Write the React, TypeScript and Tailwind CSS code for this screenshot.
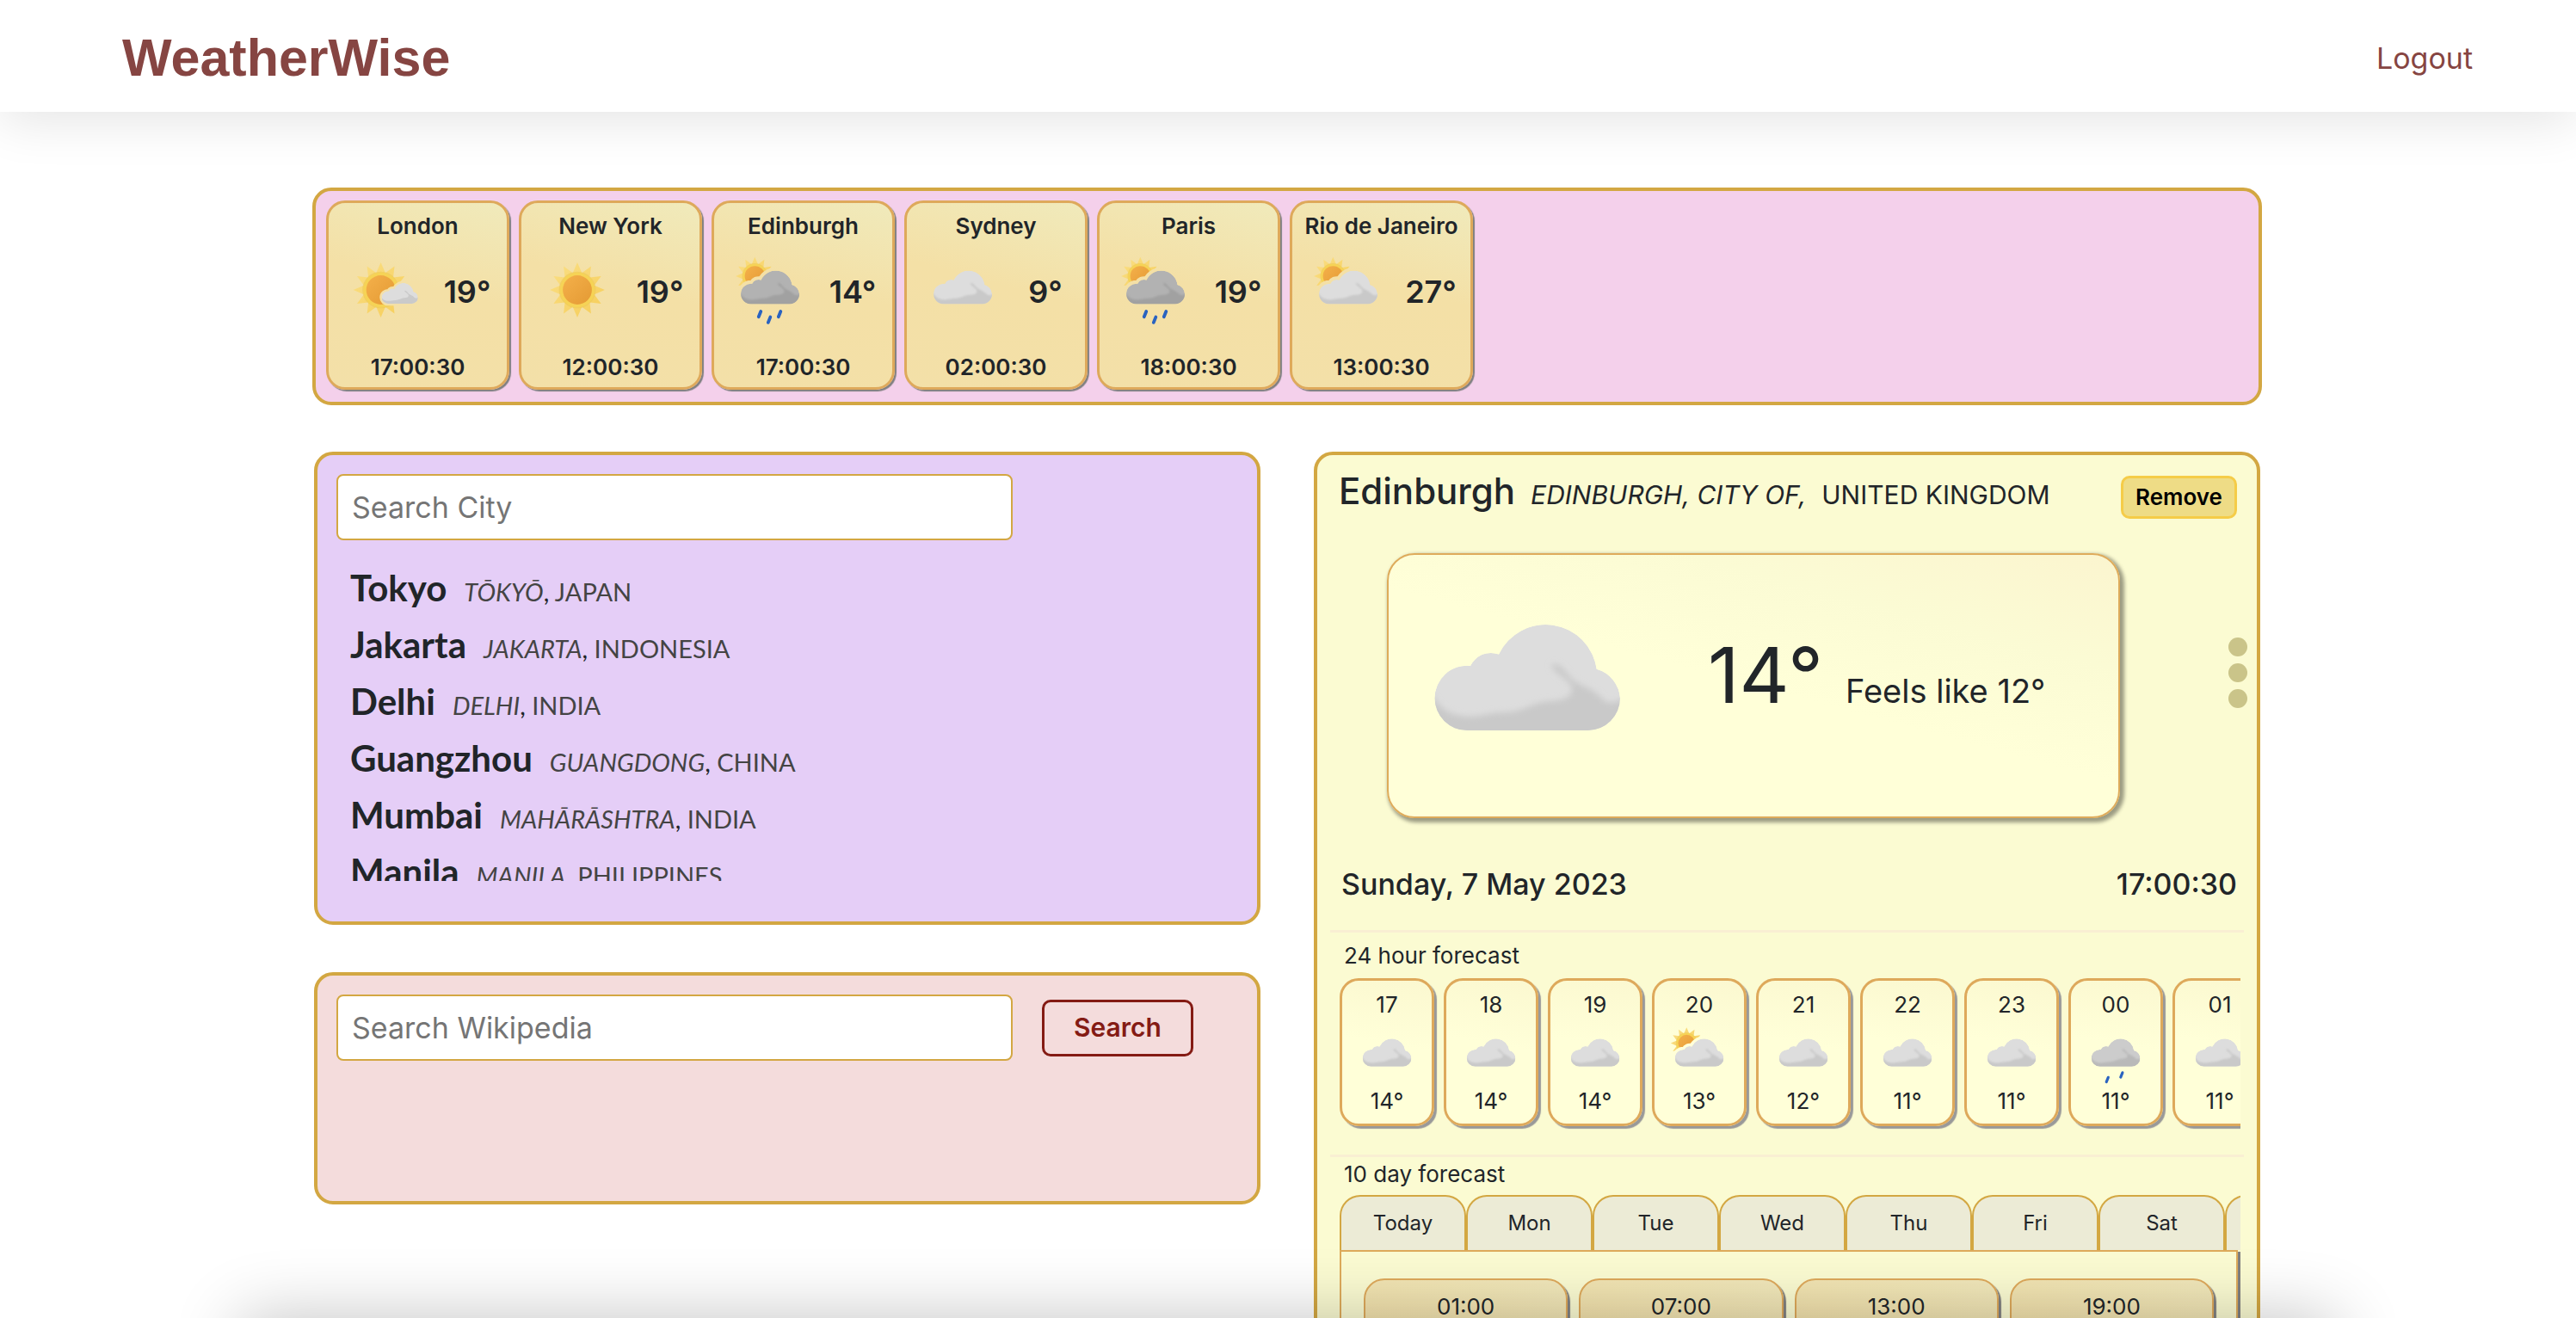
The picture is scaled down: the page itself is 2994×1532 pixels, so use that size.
import { useId } from "react";

type Sky = "partly" | "sunny" | "sunRain" | "cloudy" | "cloudSun" | "drizzle";

const CLOUD =
  "M38 122A37.5 37.5 0 0 1 0.5 84.5A37.5 37.5 0 0 1 42 47A26.5 26.5 0 0 1 75 33.5A60 60 0 0 1 188.7 50.7A37.5 37.5 0 0 1 216 85A37.5 37.5 0 0 1 179 122Z";
const SHADE =
  "M-4 78C4 92 12 104 39 106C56 106 64 101 82 101C102 100 108 94 122 90C136 86 156 90 160 76C162 64 138 56 136 46C144 40 154 56 160 62C168 70 184 72 196 86C204 92 210 90 222 84L222 130L-4 130Z";

function rays(cx: number, cy: number, outer: number, inner: number) {
  return Array.from({ length: 24 }, (_, i) => {
    const r = i % 2 === 0 ? outer : inner;
    const a = (i * Math.PI) / 12;
    return `${cx + r * Math.sin(a)},${cy - r * Math.cos(a)}`;
  }).join(" ");
}

function Sun({ id, cx, cy, r }: { id: string; cx: number; cy: number; r: number }) {
  return (
    <g>
      <polygon points={rays(cx, cy, r, r * 0.64)} fill={`url(#${id}ray)`} />
      <circle cx={cx} cy={cy} r={r * 0.67} fill="#e9c65a" opacity="0.6" />
      <circle cx={cx} cy={cy} r={r * 0.64} fill="#f6d355" />
      <circle cx={cx} cy={cy} r={r * 0.53} fill={`url(#${id}disc)`} />
    </g>
  );
}

function Cloud({ id, light, dark }: { id: string; light: string; dark: string }) {
  return (
    <g clipPath={`url(#${id}clip)`}>
      <path d={CLOUD} fill={light} />
      <path d={SHADE} fill={dark} filter={`url(#${id}soft)`} />
    </g>
  );
}

function Drop({ x, y }: { x: number; y: number }) {
  return (
    <line x1={x + 4} y1={y - 10} x2={x - 4} y2={y + 10} stroke="#2a63c0" strokeWidth="12" strokeLinecap="round" />
  );
}

function SkyIcon({ sky, className }: { sky: Sky; className: string }) {
  const id = useId().replace(/[^a-zA-Z0-9]/g, "");
  const small = "translate(97 45) scale(0.62)";
  return (
    <svg viewBox="-44 -82 304 304" className={className} aria-hidden="true">
      <defs>
        <linearGradient id={`${id}ray`} x1="0" y1="0" x2="1" y2="1">
          <stop offset="0" stopColor="#fadf85" />
          <stop offset="1" stopColor="#f6cd58" />
        </linearGradient>
        <linearGradient id={`${id}disc`} x1="0" y1="0" x2="1" y2="1">
          <stop offset="0" stopColor="#f4b04a" />
          <stop offset="1" stopColor="#e49a34" />
        </linearGradient>
        <clipPath id={`${id}clip`}>
          <path d={CLOUD} />
        </clipPath>
        <filter id={`${id}soft`} x="-10%" y="-10%" width="120%" height="120%">
          <feGaussianBlur stdDeviation="3.5" />
        </filter>
        <mask id={`${id}gap`} maskUnits="userSpaceOnUse" x="-44" y="-82" width="304" height="304">
          <rect x="-44" y="-82" width="304" height="304" fill="#fff" />
          <path
            d={CLOUD}
            fill="#000"
            stroke="#000"
            strokeWidth="24"
            transform={sky === "partly" ? small : undefined}
          />
        </mask>
      </defs>
      {sky === "sunny" && <Sun id={id} cx={108} cy={70} r={101} />}
      {sky === "partly" && (
        <>
          <g mask={`url(#${id}gap)`}>
            <Sun id={id} cx={94} cy={70} r={101} />
          </g>
          <g transform={small}>
            <Cloud id={id} light="#dddddd" dark="#cacaca" />
          </g>
        </>
      )}
      {(sky === "sunRain" || sky === "cloudSun") && (
        <g mask={`url(#${id}gap)`}>
          <Sun id={id} cx={52} cy={19} r={70} />
        </g>
      )}
      {(sky === "cloudy" || sky === "cloudSun") && <Cloud id={id} light="#dddddd" dark="#c9c9c9" />}
      {sky === "sunRain" && (
        <>
          <Cloud id={id} light="#b2b2b2" dark="#a1a1a1" />
          <Drop x={70} y={159} />
          <Drop x={105} y={180} />
          <Drop x={143} y={159} />
        </>
      )}
      {sky === "drizzle" && (
        <>
          <Cloud id={id} light="#cccccc" dark="#b9b9b9" />
          <Drop x={71} y={180} />
          <Drop x={134} y={159} />
        </>
      )}
    </svg>
  );
}

const cities: { name: string; sky: Sky; temp: number; time: string }[] = [
  { name: "London", sky: "partly", temp: 19, time: "17:00:30" },
  { name: "New York", sky: "sunny", temp: 19, time: "12:00:30" },
  { name: "Edinburgh", sky: "sunRain", temp: 14, time: "17:00:30" },
  { name: "Sydney", sky: "cloudy", temp: 9, time: "02:00:30" },
  { name: "Paris", sky: "sunRain", temp: 19, time: "18:00:30" },
  { name: "Rio de Janeiro", sky: "cloudSun", temp: 27, time: "13:00:30" },
];

const results = [
  ["Tokyo", "TŌKYŌ", "JAPAN"],
  ["Jakarta", "JAKARTA", "INDONESIA"],
  ["Delhi", "DELHI", "INDIA"],
  ["Guangzhou", "GUANGDONG", "CHINA"],
  ["Mumbai", "MAHĀRĀSHTRA", "INDIA"],
  ["Manila", "MANILA", "PHILIPPINES"],
];

const hours: { hour: string; sky: Sky; temp: number }[] = [
  { hour: "17", sky: "cloudy", temp: 14 },
  { hour: "18", sky: "cloudy", temp: 14 },
  { hour: "19", sky: "cloudy", temp: 14 },
  { hour: "20", sky: "cloudSun", temp: 13 },
  { hour: "21", sky: "cloudy", temp: 12 },
  { hour: "22", sky: "cloudy", temp: 11 },
  { hour: "23", sky: "cloudy", temp: 11 },
  { hour: "00", sky: "drizzle", temp: 11 },
  { hour: "01", sky: "cloudy", temp: 11 },
];

const days = ["Today", "Mon", "Tue", "Wed", "Thu", "Fri", "Sat", "Sun"];
const slots = ["01:00", "07:00", "13:00", "19:00"];

function CityStrip() {
  return (
    <section
      aria-label="Saved cities"
      className="flex gap-[11px] rounded-[22px] border-4 border-[#d3a742] bg-[#f4d0eb] px-3 pt-[11px] pb-[14px]"
    >
      {cities.map((c) => (
        <article
          key={c.name}
          className="flex h-[220px] w-[213px] flex-col rounded-[22px] border-[3px] border-[#dea95b] bg-[linear-gradient(195deg,#f0eabb,#f4e0a6_45%,#f3e0a8)] pt-[9px] pb-[5px] text-center shadow-[2px_2px_1px_#808080]"
        >
          <h2 className="text-[26px] leading-9 font-semibold whitespace-nowrap">{c.name}</h2>
          <div className="mt-2 flex items-center pl-[17px]">
            <SkyIcon sky={c.sky} className="size-24 shrink-0" />
            <p className="flex-1 pt-1 pl-0.5 text-[36px] leading-10 font-semibold">{c.temp}°</p>
          </div>
          <p className="mt-auto text-[26px] leading-9 font-semibold">{c.time}</p>
        </article>
      ))}
    </section>
  );
}

function CitySearch() {
  return (
    <section className="h-[550px] rounded-[22px] border-4 border-[#d3a742] bg-[#e5cef7] p-[22px]">
      <input
        type="text"
        aria-label="Search City"
        placeholder="Search City"
        className="block h-[77px] w-3/4 rounded-lg border-2 border-[#d3a742] bg-white px-4 text-[34px] placeholder:text-[#757575]"
      />
      <ul className="h-[396px] overflow-hidden pt-[22px] pl-4 font-['Lato',sans-serif]">
        {results.map(([name, region, country]) => (
          <li key={name} className="flex h-[66px] items-baseline leading-[66px] whitespace-pre">
            <span className="mr-5 text-[42px] font-bold">{name}</span>
            <span className="text-[29px]">
              <i className="text-[#444]">{region}</i>, <span className="text-[#444]">{country}</span>
            </span>
          </li>
        ))}
      </ul>
    </section>
  );
}

function WikiSearch() {
  return (
    <section className="h-[270px] rounded-[22px] border-4 border-[#d3a742] bg-[#f4dcdc] p-[22px]">
      <form className="flex items-center gap-[34px]" onSubmit={(e) => e.preventDefault()}>
        <input
          type="text"
          aria-label="Search Wikipedia"
          placeholder="Search Wikipedia"
          className="block h-[77px] w-3/4 rounded-lg border-2 border-[#d3a742] bg-white px-4 text-[34px] placeholder:text-[#757575]"
        />
        <button
          type="submit"
          className="h-[66px] w-44 rounded-[10px] border-[3px] border-[#841b14] text-[30px] font-semibold text-[#841b14]"
        >
          Search
        </button>
      </form>
    </section>
  );
}

function CityDetail() {
  return (
    <section className="rounded-t-[22px] border-4 border-[#d3a742] bg-[#fbfbd2] px-[15px] pt-3">
      <header className="flex h-[60px] items-start justify-between pr-2 pl-[10px]">
        <div className="flex items-baseline leading-[60px] whitespace-nowrap">
          <h2 className="mr-[18px] text-[42px] font-medium">Edinburgh</h2>
          <i className="mr-[18px] text-[30px]">EDINBURGH, CITY OF,</i>
          <span className="text-[30px]">UNITED KINGDOM</span>
        </div>
        <button
          type="button"
          className="mt-3 h-[50px] w-[135px] rounded-[10px] border-[3px] border-[#f5cc48] bg-[#eedc86] text-[26px] leading-10 font-semibold text-black"
        >
          Remove
        </button>
      </header>

      <div className="relative mt-[42px] pl-[66px]">
        <div className="flex h-[308px] w-[852px] items-center rounded-[32px] border-2 border-[#deab5b] bg-[linear-gradient(195deg,#fbf5cf,#fbfbd4_25%,#ffffd8_50%)] pl-[9px] shadow-[3px_3px_4px_2px_rgba(0,0,0,0.38)]">
          <SkyIcon sky="cloudy" className="size-[304px] shrink-0" />
          <p className="flex items-baseline pb-6 pl-[58px] whitespace-nowrap">
            <span className="text-[90px] leading-[100px]">14°</span>
            <span className="ml-[26px] text-[38px]">Feels like 12°</span>
          </p>
        </div>
        <button
          type="button"
          aria-label="Change view"
          className="absolute top-[98px] -right-1 flex flex-col gap-2"
        >
          <span className="size-[22px] rounded-full bg-[#cac489]" />
          <span className="size-[22px] rounded-full bg-[#cac489]" />
          <span className="size-[22px] rounded-full bg-[#cac489]" />
        </button>
      </div>

      <div className="mt-[52px] flex justify-between pr-2 pl-[13px] text-[34px] leading-[50px] font-medium">
        <p>Sunday, 7 May 2023</p>
        <p>17:00:30</p>
      </div>

      <hr className="mt-7 border-t-[3px] border-[#f9efd3]" />
      <h3 className="mt-[9px] pl-4 text-[26px] leading-9">24 hour forecast</h3>
      <div className="mt-2 mr-1 ml-[11px] flex gap-[11px] overflow-hidden pb-1">
        {hours.map((h) => (
          <article
            key={h.hour}
            className="flex h-[172px] w-[110px] shrink-0 flex-col items-center rounded-[22px] border-[3px] border-[#dea95b] bg-[linear-gradient(190deg,#fbf8d0,#ffffd8_45%)] text-[26px] leading-9 shadow-[3px_3px_1px_#999]"
          >
            <p className="mt-[10px]">{h.hour}</p>
            <SkyIcon sky={h.sky} className="size-20" />
            <p className="-mt-1">{h.temp}°</p>
          </article>
        ))}
      </div>

      <hr className="mt-[29px] border-t-[3px] border-[#f9efd3]" />
      <h3 className="mt-0.5 pl-4 text-[26px] leading-9">10 day forecast</h3>
      <div className="mt-1.5 mr-1 ml-[11px] overflow-hidden">
        <div role="tablist" className="flex">
          {days.map((d, i) => (
            <button
              key={d}
              type="button"
              role="tab"
              aria-selected={i === 0}
              className="h-16 w-[147px] shrink-0 rounded-t-[24px] border-2 border-b-0 border-[#d3a742] bg-[#ecebd6] text-[24px]"
            >
              {d}
            </button>
          ))}
        </div>
        <div
          role="tabpanel"
          className="mr-[3px] grid grid-cols-4 gap-[13px] border-2 border-b-0 border-[#deab5b] px-[26px] pt-[31px] shadow-[3px_2px_0_#808080]"
        >
          {slots.map((s) => (
            <article
              key={s}
              className="h-60 rounded-[24px] border-2 border-[#dea95b] bg-[linear-gradient(195deg,#f1e8bb,#f3e0a8_45%)] pt-[13px] text-center text-[26px] leading-9 shadow-[3px_3px_1px_#808080]"
            >
              {s}
            </article>
          ))}
        </div>
      </div>
    </section>
  );
}

export default function App() {
  return (
    <div className="h-screen overflow-hidden bg-white font-['Inter',sans-serif] text-[#212529]">
      <header className="flex h-[130px] items-center justify-between bg-white pt-1 pr-[120px] pl-[142px] shadow-[0_10px_60px_rgba(0,0,0,0.11)]">
        <h1 className="font-['Liberation_Sans',Arial,sans-serif] text-[61px] leading-[70px] font-bold text-[#864542]">
          WeatherWise
        </h1>
        <a href="#logout" className="text-[34px] text-[#864542]">
          Logout
        </a>
      </header>
      <main className="pt-[88px] pr-[365px] pl-[363px]">
        <CityStrip />
        <div className="mt-[54px] grid grid-cols-2 items-start gap-[62px] px-0.5">
          <div className="flex flex-col gap-[55px]">
            <CitySearch />
            <WikiSearch />
          </div>
          <CityDetail />
        </div>
      </main>
      <div className="pointer-events-none fixed inset-x-[280px] top-full h-40 shadow-[0_0_80px_rgba(0,0,0,0.24)]" />
    </div>
  );
}
